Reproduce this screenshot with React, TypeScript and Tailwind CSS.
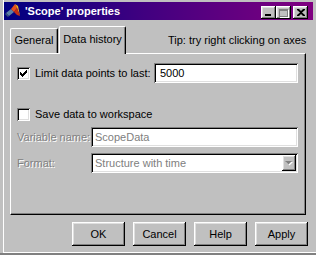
import React from "react";

const raised =
  "shadow-[inset_-1px_-1px_#000,inset_1px_1px_#fff,inset_-2px_-2px_#808080,inset_2px_2px_#dfdfdf]";
const sunken =
  "shadow-[inset_1px_1px_#808080,inset_-1px_-1px_#fff,inset_2px_2px_#000,inset_-2px_-2px_#dfdfdf]";
const etched = "text-[#808080] [text-shadow:1px_1px_0_#fff]";

const MatlabIcon = () => (
  <svg width="16" height="16" viewBox="0 0 16 16">
    <polygon points="1,10 6,6 9,9 4,13" fill="#5b7fa6" />
    <polygon points="1,10 4,13 3,14 0,11" fill="#3a5577" />
    <polygon points="6,6 10,1 12,5 9,9" fill="#e8501a" />
    <polygon points="10,1 13,3 15,13 12,5" fill="#f7b21a" />
    <polygon points="9,9 12,5 15,13 12,12" fill="#c62e10" />
  </svg>
);

const CaptionButton = ({ children, gap }: { children: React.ReactNode; gap?: boolean }) => (
  <div
    className={`w-[15px] h-[13px] bg-[#c0c0c0] flex items-center justify-center ${raised} ${gap ? "ml-[2px]" : ""}`}
  >
    {children}
  </div>
);

const TitleBar = () => (
  <div className="w-[309px] h-[18px] flex items-center bg-[linear-gradient(90deg,#000080,#400080_45%,#800080)] pr-[5px]">
    <div className="ml-[1px] w-[16px] h-[16px]">
      <MatlabIcon />
    </div>
    <span className="ml-[4px] text-white font-bold text-[11px] leading-none">'Scope' properties</span>
    <div className="ml-auto flex self-end mb-[1px]">
      <CaptionButton>
        <div className="w-[6px] h-[2px] bg-black mt-[5px] mr-[1px]" />
      </CaptionButton>
      <CaptionButton>
        <div className="w-[9px] h-[8px] border border-[#808080] border-t-2 shadow-[1px_1px_0_#fff]" />
      </CaptionButton>
      <CaptionButton gap>
        <svg width="8" height="7" viewBox="0 0 8 7">
          <path d="M0 0h2l2 2 2-2h2v1L5 3.5 8 6v1H6L4 5 2 7H0V6l3-2.5L0 1z" fill="#000" />
        </svg>
      </CaptionButton>
    </div>
  </div>
);

const Checkbox = ({ checked }: { checked?: boolean }) => (
  <div className={`w-[13px] h-[13px] bg-white shrink-0 flex items-center justify-center ${sunken}`}>
    {checked && (
      <svg width="7" height="7" viewBox="0 0 7 7">
        <path d="M0 2h1v1h1v1h1V3h1V2h1V1h1V0h1v3H6v1H5v1H4v1H3v1H2V6H1V5H0z" fill="#000" />
      </svg>
    )}
  </div>
);

const DialogButton = ({ label }: { label: string }) => (
  <div className={`w-[53px] h-[24px] bg-[#c0c0c0] flex items-center justify-center ${raised}`}>{label}</div>
);

export default function App() {
  return (
    <div className="w-[316px] h-[255px] bg-[#c0c0c0] overflow-hidden font-['Liberation_Sans',Arial,sans-serif] text-[11px] text-black flex flex-col">
      <div className="ml-[3px] h-[253px] border-l border-b border-white pt-[2px] flex flex-col">
        <TitleBar />

        <div className="ml-[6px] mt-[6px]">
          <div className="h-[27px] flex items-end">
            <div className="w-[48px] h-[25px] border-l border-t border-white border-r border-r-black rounded-tl-[2px] rounded-tr-[2px] shadow-[inset_-1px_0_#808080] flex items-center justify-center pb-[1px]">
              General
            </div>
            <div className="relative z-10 ml-[1px] -mb-[1px] w-[67px] h-[28px] bg-[#c0c0c0] border-l border-t border-white border-r border-r-black rounded-tl-[2px] rounded-tr-[2px] shadow-[inset_-1px_0_#808080] flex items-center justify-center pb-[2px]">
              Data history
            </div>
            <div className="ml-[42px] self-center mt-[2px] whitespace-nowrap">Tip: try right clicking on axes</div>
          </div>

          <div className="w-[296px] h-[162px] border-t border-l border-white border-r border-b border-r-black border-b-black shadow-[inset_-1px_-1px_#808080] pl-[6px] pt-[9px]">
            <div className="flex items-center h-[20px]">
              <Checkbox checked />
              <span className="ml-[5px] w-[119px] whitespace-nowrap">Limit data points to last:</span>
              <div className={`w-[144px] h-[20px] bg-white flex items-center pl-[6px] ${sunken}`}>5000</div>
            </div>

            <div className="flex items-center h-[13px] mt-[25px]">
              <Checkbox />
              <span className="ml-[5px] whitespace-nowrap">Save data to workspace</span>
            </div>

            <div className="flex items-center h-[20px] mt-[6px]">
              <span className={`w-[74px] whitespace-nowrap ${etched}`}>Variable name:</span>
              <div className={`w-[207px] h-[20px] bg-white flex items-center pl-[4px] text-[#808080] ${sunken}`}>
                ScopeData
              </div>
            </div>

            <div className="flex items-center h-[20px] mt-[6px]">
              <span className={`w-[74px] whitespace-nowrap ${etched}`}>Format:</span>
              <div className={`w-[207px] h-[20px] bg-white flex items-center pl-[4px] pr-[2px] text-[#808080] ${sunken}`}>
                <span className="flex-1">Structure with time</span>
                <div className={`w-[14px] h-[16px] bg-[#c0c0c0] flex items-center justify-center ${raised}`}>
                  <svg width="8" height="5" viewBox="0 0 8 5">
                    <path d="M1 1h7L4.5 4.5z" fill="#fff" />
                    <path d="M0 0h7L3.5 3.5z" fill="#808080" />
                  </svg>
                </div>
              </div>
            </div>
          </div>
        </div>

        <div className="ml-[68px] mt-[7px] flex gap-[8px]">
          <DialogButton label="OK" />
          <DialogButton label="Cancel" />
          <DialogButton label="Help" />
          <DialogButton label="Apply" />
        </div>
      </div>
      <div className="h-[2px] bg-[#808080]" />
    </div>
  );
}
